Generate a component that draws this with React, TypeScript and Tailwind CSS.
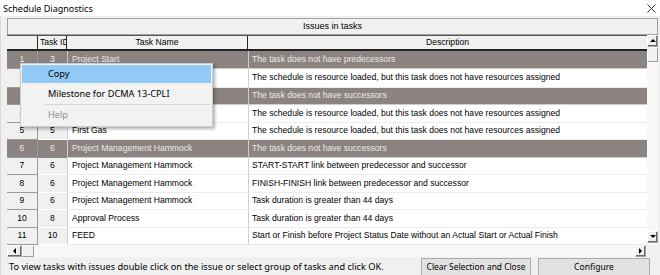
import React from "react"

type Row = { n: string; id: string; name: string; desc: string; sel?: boolean }

const rows: Row[] = [
  { n: "1", id: "3", name: "Project Start", desc: "The task does not have predecessors", sel: true },
  { n: "2", id: "", name: "", desc: "The schedule is resource loaded, but this task does not have resources assigned" },
  { n: "3", id: "", name: "", desc: "The task does not have successors", sel: true },
  { n: "4", id: "", name: "", desc: "The schedule is resource loaded, but this task does not have resources assigned" },
  { n: "5", id: "5", name: "First Gas", desc: "The schedule is resource loaded, but this task does not have resources assigned" },
  { n: "6", id: "6", name: "Project Management Hammock", desc: "The task does not have successors", sel: true },
  { n: "7", id: "6", name: "Project Management Hammock", desc: "START-START link between predecessor and successor" },
  { n: "8", id: "6", name: "Project Management Hammock", desc: "FINISH-FINISH link between predecessor and successor" },
  { n: "9", id: "6", name: "Project Management Hammock", desc: "Task duration is greater than 44 days" },
  { n: "10", id: "8", name: "Approval Process", desc: "Task duration is greater than 44 days" },
  { n: "11", id: "10", name: "FEED", desc: "Start or Finish before Project Status Date without an Actual Start or Actual Finish" },
]

function Arrow({ dir }: { dir: "up" | "down" | "left" | "right" }) {
  const pts = {
    up: "1,5 4,2 7,5",
    down: "1,2 4,5 7,2",
    left: "5,1 2,4 5,7",
    right: "2,1 5,4 2,7",
  }[dir]
  return (
    <svg width="8" height="8" viewBox="0 0 8 8">
      <polygon points={pts} fill="#000" />
    </svg>
  )
}

function ScrollBtn({ dir, className }: { dir: "up" | "down" | "left" | "right"; className: string }) {
  return (
    <div className={`flex items-center justify-center border border-[#a0a0a0] bg-[#f0f0f0] border-t-white border-l-white shadow-[inset_-1px_-1px_0_#696969] ${className}`}>
      <Arrow dir={dir} />
    </div>
  )
}

export default function App() {
  return (
    <div className="relative flex h-[275px] w-[660px] flex-col overflow-hidden bg-[#f0f0f0] font-['Liberation_Sans',Arial,sans-serif]">
      {/* title bar */}
      <div className="flex h-[18px] items-center justify-between bg-white pl-[3px] pr-[4px]">
        <span className="font-['Noto_Sans',sans-serif] text-[9px] leading-none text-black">Schedule Diagnostics</span>
        <svg width="9" height="9" viewBox="0 0 9 9" className="mt-[1px]">
          <path d="M0.5 0.5 L8.5 8.5 M8.5 0.5 L0.5 8.5" stroke="#333" strokeWidth="1" />
        </svg>
      </div>

      <div className="flex flex-1 flex-col border-l border-[#d8d8d8] pl-[6px] pt-[2px]">
        {/* grid */}
        <div className="w-[651px]">
          <div className="flex h-[17px] items-center justify-center border border-[#a0a0a0] bg-[#f0f0f0] text-[9px] text-black">
            Issues in tasks
          </div>
          <div className="flex">
            <div className="w-[640px]">
              {/* column headers */}
              <div className="grid h-[16px] grid-cols-[31px_29px_181px_399px] border-t border-[#555] border-b-2 border-b-[#222] bg-[#f0f0f0] text-[8.6px] text-black">
                <div className="border-r border-[#222]" />
                <div className="flex items-center overflow-hidden whitespace-nowrap border-r border-[#222] pl-[2px]">Task ID</div>
                <div className="flex items-center justify-center border-r border-[#222]">Task Name</div>
                <div className="flex items-center justify-center">Description</div>
              </div>
              {rows.map((r, i) => (
                <div
                  key={r.n}
                  className={`grid grid-cols-[31px_29px_181px_399px] text-[8.6px] ${i === 1 ? "h-[19px]" : "h-[17.5px]"} ${r.sel ? "bg-[#8b8380] text-[#ecebea]" : "text-black"}`}
                >
                  <div className={`flex items-center justify-center border-b border-r border-[#9a9a9a] ${r.sel ? "bg-[#8b8380]" : "bg-[#f0f0f0]"}`}>{r.n}</div>
                  <div className={`flex items-center justify-center border-b ${r.sel ? "border-[#8b8380] bg-[#8b8380]" : "border-white bg-[#f0f0f0]"}`}>{r.id}</div>
                  <div className={`flex items-center overflow-hidden whitespace-nowrap border-b border-l pl-[4px] ${r.sel ? "border-[#d0cccb]" : "border-[#ececec] border-l-[#d0d0d0] bg-white"}`}>{r.name}</div>
                  <div className={`flex items-center overflow-hidden whitespace-nowrap border-b border-l pl-[3px] ${r.sel ? "border-[#d0cccb]" : "border-[#ececec] border-l-[#d0d0d0] bg-white"}`}>{r.desc}</div>
                </div>
              ))}
            </div>
            {/* vertical scrollbar */}
            <div className="flex w-[11px] flex-col">
              <ScrollBtn dir="up" className="h-[12px]" />
              <div className="h-[15px] border border-[#a0a0a0] border-t-white border-l-white bg-[#f0f0f0]" />
              <div className="flex-1 bg-[#f8f8f8]" />
              <ScrollBtn dir="down" className="h-[12px]" />
              <div className="h-[2px] bg-[#f8f8f8]" />
            </div>
          </div>
          {/* horizontal scrollbar */}
          <div className="flex h-[12px]">
            <ScrollBtn dir="left" className="w-[15px]" />
            <div className="w-[12px] border border-[#a0a0a0] border-t-white border-l-white bg-[#f0f0f0]" />
            <div className="flex-1 bg-[#f8f8f8]" />
            <ScrollBtn dir="right" className="w-[11px]" />
            <div className="w-[12px]" />
          </div>
        </div>

        {/* footer */}
        <div className="mt-[1px] flex h-[17px] items-start">
          <span className="w-[414px] pl-[2px] pt-[2px] font-['Noto_Sans',sans-serif] text-[9.2px] leading-[14px] text-black">
            To view tasks with issues double click on the issue or select group of tasks and click OK.
          </span>
          <div className="flex h-[18px] w-[110px] items-center justify-center whitespace-nowrap border border-[#adadad] bg-[#e1e1e1] font-['Noto_Sans',sans-serif] text-[8.4px] text-black">
            Clear Selection and Close
          </div>
          <div className="ml-[7px] flex h-[18px] w-[112px] items-center justify-center whitespace-nowrap border border-[#adadad] bg-[#e1e1e1] font-['Noto_Sans',sans-serif] text-[8.6px] text-black">
            Configure
          </div>
        </div>
      </div>

      {/* context menu */}
      <div className="absolute left-[20px] top-[63px] w-[193px] border border-[#cccccc] bg-[#f2f2f2] pb-[1px] pt-[1px] font-['Noto_Sans',sans-serif] text-[9.2px] shadow-[2px_2px_3px_rgba(0,0,0,0.3)]">
        <div className="mx-[1px] flex h-[18px] items-center bg-[#91c9f7] pl-[26px] text-black">Copy</div>
        <div className="flex h-[21px] items-center pl-[27px] text-black">Milestone for DCMA 13-CPLI</div>
        <div className="ml-[24px] mr-[2px] h-px bg-[#d7d7d7]" />
        <div className="flex h-[20px] items-center pl-[27px] text-[#8d8d8d]">Help</div>
      </div>
    </div>
  )
}
